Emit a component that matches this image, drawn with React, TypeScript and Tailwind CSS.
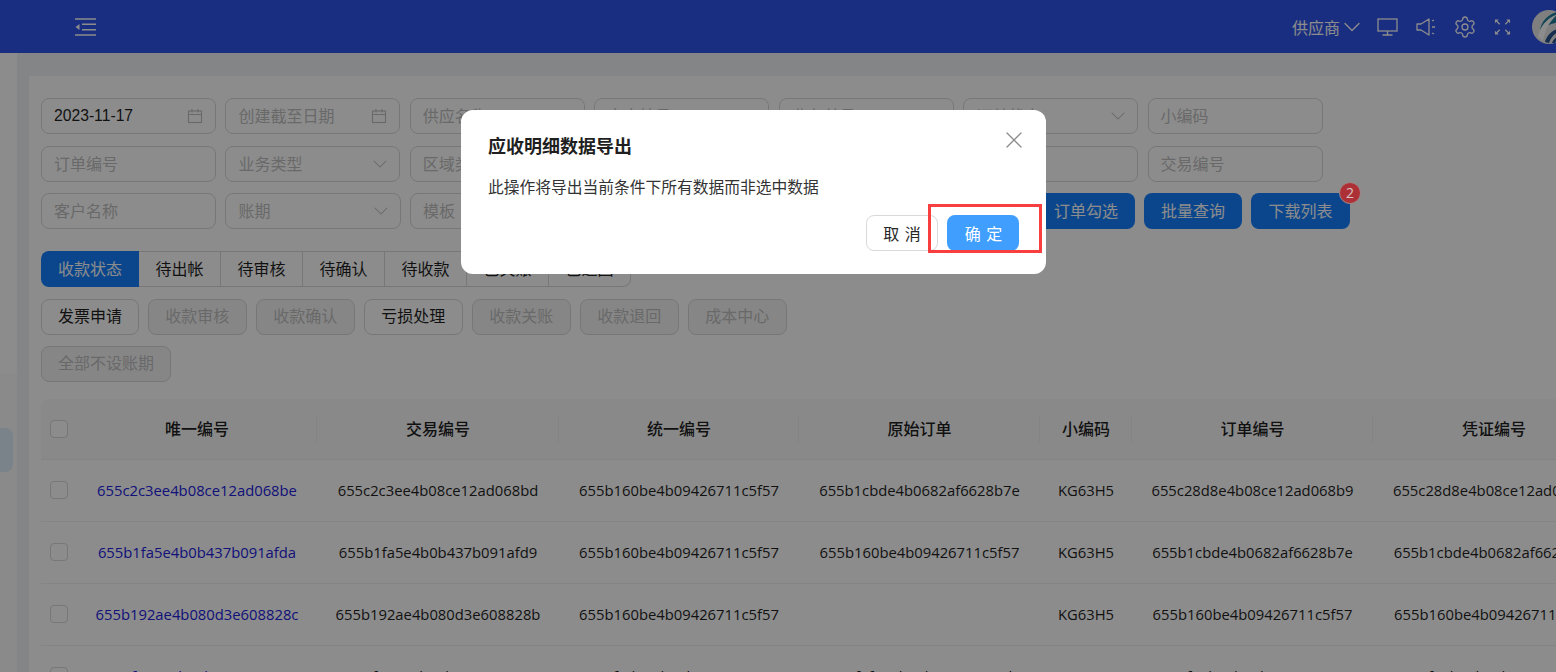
import { ChevronDown, Settings, X } from "lucide-react";

const rows = [
  ["655c2c3ee4b08ce12ad068be", "655c2c3ee4b08ce12ad068bd", "655b160be4b09426711c5f57", "655b1cbde4b0682af6628b7e", "KG63H5", "655c28d8e4b08ce12ad068b9", "655c28d8e4b08ce12ad068b9"],
  ["655b1fa5e4b0b437b091afda", "655b1fa5e4b0b437b091afd9", "655b160be4b09426711c5f57", "655b160be4b09426711c5f57", "KG63H5", "655b1cbde4b0682af6628b7e", "655b1cbde4b0682af6628b7e"],
  ["655b192ae4b080d3e608828c", "655b192ae4b080d3e608828b", "655b160be4b09426711c5f57", "", "KG63H5", "655b160be4b09426711c5f57", "655b160be4b09426711c5f57"],
  ["655af718e4b08b37c0e08800", "655af718e4b08b37c0e08800", "655af1d4e4b08b37c0e08870", "655af0f6e4b08b37c0e0887b", "KG63H5", "655af09be4b08b37c0e08864", "655af09be4b08b37c0e08864"],
];

const headers = ["唯一编号", "交易编号", "统一编号", "原始订单", "小编码", "订单编号", "凭证编号"];

function CalendarIcon() {
  return (
    <svg width="16" height="16" viewBox="0 0 16 16" fill="none" stroke="currentColor" strokeWidth="1.1">
      <rect x="1.5" y="3" width="13" height="11.5" />
      <path d="M1.5 6.5h13M5 1v3.5M11 1v3.5" />
    </svg>
  );
}

function Field({ label, icon }: { label: string; icon?: "date" | "select" }) {
  return (
    <div
      className={
        icon === "select"
          ? "flex h-9 items-center justify-between rounded-lg border border-[#d9d9d9] bg-white pl-[12px] pr-[7px] text-[#bfbfbf]"
          : "flex h-9 items-center justify-between rounded-lg border border-[#d9d9d9] bg-white px-3 text-[#bfbfbf]"
      }
    >
      <span className="truncate">{label}</span>
      {icon === "date" && <CalendarIcon />}
      {icon === "select" && <ChevronDown size={24} strokeWidth={1.05} />}
    </div>
  );
}

function ActionButton({ label, disabled, tight }: { label: string; disabled?: boolean; tight?: boolean }) {
  return (
    <button
      className={`h-9 rounded-lg border border-[#d9d9d9] pb-[2px] ${tight ? "px-4" : "px-[16.35px]"} ${
        disabled ? "bg-[#f5f5f5] text-[#bfbfbf]" : "bg-white text-[#1f1f1f]"
      }`}
    >
      {label}
    </button>
  );
}

function PrimaryButton({ label, wide }: { label: string; wide?: boolean }) {
  return (
    <button className={`h-9 rounded-lg bg-[#1480ff] text-white ${wide ? "w-[99px]" : "w-[98px]"}`}>{label}</button>
  );
}

function CheckBox() {
  return <span className="mx-auto block size-[18px] rounded-[4px] border border-[#d9d9d9] bg-white" />;
}

export default function App() {
  return (
    <div className="relative h-screen w-full overflow-hidden bg-[#f0f2f5] font-['Open_Sans','Noto_Sans_CJK_SC',sans-serif] text-base text-[#1f1f1f]">
      <header className="flex h-[53px] items-center justify-between bg-[#2f54eb] pl-[75px] text-white">
        <svg width="21" height="18" viewBox="0 0 21 18" fill="none" stroke="currentColor" strokeWidth="1.5">
          <path d="M0 1h21M7 6.2h14M7 11.8h14M0 17h21" />
          <path d="M0.5 9 4.5 6v6z" fill="currentColor" stroke="none" />
        </svg>
        <div className="flex items-center">
          <span className="font-['Noto_Sans_CJK_SC',sans-serif]">供应商</span>
          <ChevronDown size={28} strokeWidth={1.1} className="-ml-[2px] mr-[11px]" />
          <svg width="21" height="18" viewBox="0 0 21 18" fill="none" stroke="currentColor" strokeWidth="1.3" className="mr-[18px]">
            <rect x="1" y="1" width="19" height="12" />
            <path d="M10.5 13v4M5.5 17h10" />
          </svg>
          <svg width="21" height="18" viewBox="0 0 21 18" fill="none" stroke="currentColor" strokeWidth="1.3" className="mr-[16px]">
            <path d="M1 6h4l8-5v16l-8-5H1z" strokeLinejoin="round" />
            <path d="M16 3l2-1M16 9h3M16 15l2 1" />
          </svg>
          <Settings size={24} strokeWidth={1.3} className="mr-[17px]" />
          <svg width="17" height="18" viewBox="0 0 18 18" fill="none" stroke="currentColor" strokeWidth="1.4" className="mr-[21px]">
            <path d="M2 2l4 4M16 2l-4 4M2 16l4-4M16 16l-4-4" />
            <path d="M1 1h4L1 5zM17 1h-4l4 4zM1 17h4l-4-4zM17 17h-4l4-4z" fill="currentColor" stroke="none" />
          </svg>
          <svg width="34" height="34" viewBox="0 0 34 34" className="-mr-[10px]">
            <circle cx="17" cy="17" r="17" fill="#e8e8e8" />
            <path d="M8 21C9 12 15 5 25 2c4 2 7 6 8 10-10 0-19 3-25 9z" fill="#1f7f9c" />
            <path d="M6 27C8 16 15 8 26 4 18 11 13 19 11 31z" fill="#ffffff" />
            <path d="M13 32c2-8 9-14 21-15v3c-9 1-14 5-17 13z" fill="#27508f" />
            <path d="M20 33c2-5 6-8 14-9v2c-6 1-9 3-11 7z" fill="#27508f" />
          </svg>
        </div>
      </header>

      <div className="flex h-[619px]">
        <aside className="flex w-[17px] shrink-0 flex-col bg-white">
          <div className="h-[320px] shrink-0 bg-[#ffffff]" />
          <div className="flex-1 bg-[#fbfbfb] pt-[55px]">
            <div className="h-[44px] w-[13px] rounded-r-lg bg-[#dfeefb]" />
          </div>
        </aside>
        <main className="ml-[12px] mt-[23px] min-w-0 flex-1 bg-white pl-3 pt-[22px]">
          <div className="grid w-[1281.6px] grid-cols-7 gap-x-[9.4px] gap-y-[11.5px]">
            <div className="flex h-9 items-center justify-between rounded-lg border border-[#d9d9d9] bg-white px-3 font-['Liberation_Sans',sans-serif] text-[15.7px] text-[#1f1f1f]">
              2023-11-17
              <span className="text-[#bfbfbf]"><CalendarIcon /></span>
            </div>
            <Field label="创建截至日期" icon="date" />
            <Field label="供应名称" />
            <Field label="客户编号" />
            <Field label="业务单号" />
            <Field label="订单状态" icon="select" />
            <Field label="小编码" />
            <Field label="订单编号" />
            <Field label="业务类型" icon="select" />
            <Field label="区域类型" icon="select" />
            <Field label="凭证编号" />
            <Field label="原始订单" />
            <Field label="统一编号" />
            <Field label="交易编号" />
          </div>
          <div className="mt-[11.5px] flex w-[1309px] items-center">
            <div className="grid w-[544px] shrink-0 grid-cols-3 gap-x-[9.4px]">
              <Field label="客户名称" />
              <Field label="账期" icon="select" />
              <Field label="模板" icon="select" />
            </div>
            <div className="ml-auto flex items-center gap-[9px]">
              <PrimaryButton label="订单勾选" />
              <PrimaryButton label="批量查询" />
              <div className="relative">
                <PrimaryButton label="下载列表" wide />
                <span className="absolute -right-[11px] -top-[11px] z-10 flex size-[22px] items-center justify-center rounded-full border border-[#a08888] bg-[#ad3036] text-sm text-[#d8c4c4]">2</span>
              </div>
            </div>
          </div>

          <div className="mt-[22px] flex h-9 w-[590px]">
            <span className="flex w-[98px] items-center justify-center rounded-l-lg bg-[#1480ff] text-white">收款状态</span>
            {["待出帐", "待审核", "待确认", "待收款", "已关账", "已退回"].map((tab, index) => (
              <span
                key={tab}
                className={
                  index === 5
                    ? "flex w-[82px] items-center justify-center rounded-r-lg border border-l-0 border-[#d9d9d9]"
                    : "flex w-[82px] items-center justify-center border border-l-0 border-[#d9d9d9]"
                }
              >
                {tab}
              </span>
            ))}
          </div>

          <div className="mt-3 flex gap-[9.3px]">
            <div className="-mr-[0.3px]">
              <ActionButton label="发票申请" tight />
            </div>
            <ActionButton label="收款审核" disabled />
            <ActionButton label="收款确认" disabled />
            <ActionButton label="亏损处理" />
            <ActionButton label="收款关账" disabled />
            <ActionButton label="收款退回" disabled />
            <ActionButton label="成本中心" disabled />
          </div>
          <div className="mt-[11px]">
            <ActionButton label="全部不设账期" disabled tight />
          </div>

          <div className="mt-[17px] overflow-hidden">
            <table className="w-[1574px] table-fixed border-collapse text-center">
              <colgroup>
                <col className="w-[36px]" />
                <col className="w-[240px]" />
                <col className="w-[242px]" />
                <col className="w-[240px]" />
                <col className="w-[241px]" />
                <col className="w-[92px]" />
                <col className="w-[241px]" />
                <col className="w-[242px]" />
              </colgroup>
              <thead>
                <tr className="h-[60px] border-b border-[#f0f0f0] bg-[#fafafa]">
                  <th className="rounded-tl-lg"><CheckBox /></th>
                  {headers.map((title) => (
                    <th key={title} className="relative font-medium">
                      {title}
                      <span className="absolute right-0 top-1/2 h-[28px] w-px -translate-y-1/2 bg-[#f0f0f0]" />
                    </th>
                  ))}
                </tr>
              </thead>
              <tbody className="text-[14.8px]">
                {rows.map((row) => (
                  <tr key={row[0]} className="h-[62px] border-b border-[#f0f0f0]">
                    <td><CheckBox /></td>
                    {row.map((cell, index) => (
                      <td key={index} className={index === 0 ? "whitespace-nowrap text-[#2222dd]" : "whitespace-nowrap"}>
                        {cell}
                      </td>
                    ))}
                  </tr>
                ))}
              </tbody>
            </table>
          </div>
        </main>
      </div>

      <div className="absolute inset-0 bg-black/45" />

      <div className="absolute left-[461px] top-[110px] h-[164px] w-[585px] rounded-xl bg-white px-[27px] pt-[22px] font-['Noto_Sans_CJK_SC',sans-serif]">
        <h2 className="text-lg font-semibold leading-[26px] text-[#1f1f1f]">应收明细数据导出</h2>
        <X size={28} strokeWidth={1.1} className="absolute right-[18px] top-[16px] text-[#8c8c8c]" />
        <p className="mt-[17px] text-[15.76px] leading-[24px] text-[#333333]">此操作将导出当前条件下所有数据而非选中数据</p>
        <div className="mt-[16px] flex justify-end gap-[9px]">
          <button className="h-9 w-[72px] rounded-lg border border-[#d9d9d9] bg-white pl-px tracking-[1px] text-[#262626]">取 消</button>
          <button className="h-9 w-[72px] rounded-lg bg-[#409eff] pl-[2px] tracking-[1px] text-white">确 定</button>
        </div>
      </div>

      <div className="absolute left-[928px] top-[204px] h-[49px] w-[114px] border-[3px] border-[#f83e3e]" />
    </div>
  );
}
